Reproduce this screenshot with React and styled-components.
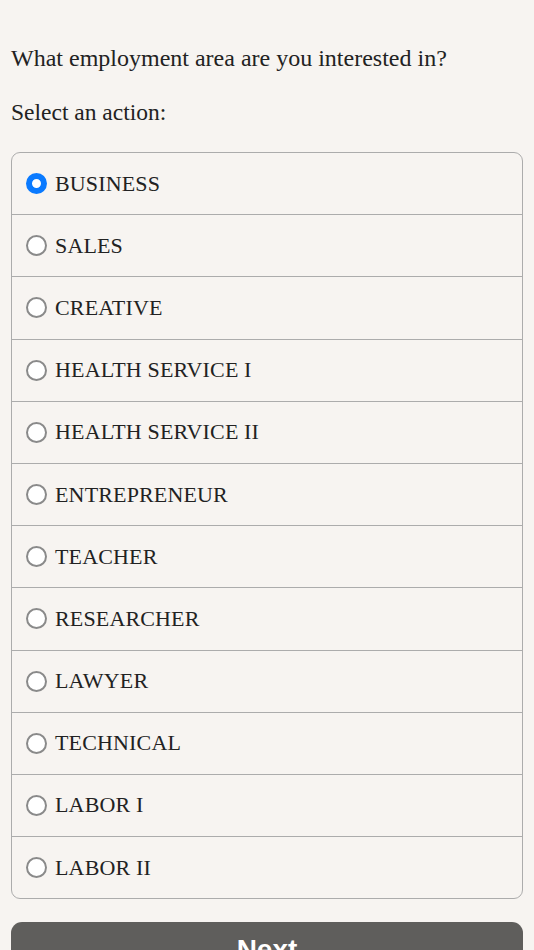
import React, { useState } from 'react';
import styled, { createGlobalStyle } from 'styled-components';

const options = [
  'BUSINESS',
  'SALES',
  'CREATIVE',
  'HEALTH SERVICE I',
  'HEALTH SERVICE II',
  'ENTREPRENEUR',
  'TEACHER',
  'RESEARCHER',
  'LAWYER',
  'TECHNICAL',
  'LABOR I',
  'LABOR II',
];

const GlobalStyle = createGlobalStyle`
  html, body {
    margin: 0;
    padding: 0;
    background: #f7f4f1;
  }
  body {
    font-family: 'Liberation Serif', 'DejaVu Serif', serif;
    color: #222;
  }
`;

export default function App() {
  const [selected, setSelected] = useState('BUSINESS');

  return (
    <>
      <GlobalStyle />
      <Page>
        <Question>What employment area are you interested in?</Question>
        <Prompt>Select an action:</Prompt>
        <OptionList>
          {options.map((opt) => (
            <OptionRow key={opt} onClick={() => setSelected(opt)}>
              <Radio checked={selected === opt} />
              <Label>{opt}</Label>
            </OptionRow>
          ))}
        </OptionList>
        <NextButton>Next</NextButton>
      </Page>
    </>
  );
}

const Page = styled.div`
  padding: 43px 11px 40px;
`;

const Question = styled.p`
  margin: 0;
  font-size: 24px;
  line-height: 30px;
`;

const Prompt = styled.p`
  margin: 24px 0 0;
  font-size: 23.5px;
  line-height: 30px;
`;

const OptionList = styled.div`
  margin-top: 25px;
  border: 1px solid #acacac;
  border-radius: 9px;
  overflow: hidden;
`;

const OptionRow = styled.div`
  display: flex;
  align-items: center;
  height: 61.2px;
  padding-left: 14px;
  cursor: pointer;

  & + & {
    border-top: 1px solid #acacac;
  }
`;

const Radio = styled.span`
  box-sizing: border-box;
  width: 21px;
  height: 21px;
  border-radius: 50%;
  flex-shrink: 0;
  background: #fff;
  border: ${(props) => (props.checked ? '6px solid #0a7aff' : '2px solid #8a8a8a')};
`;

const Label = styled.span`
  margin-left: 8px;
  font-size: 22px;
  letter-spacing: 0.15px;
  color: #222;
`;

const NextButton = styled.button`
  display: block;
  width: 100%;
  height: 56px;
  margin-top: 23px;
  border: none;
  border-radius: 11px;
  background: #5f5e5c;
  color: #fff;
  font-family: 'Liberation Sans', Arial, sans-serif;
  font-weight: bold;
  font-size: 28px;
`;
